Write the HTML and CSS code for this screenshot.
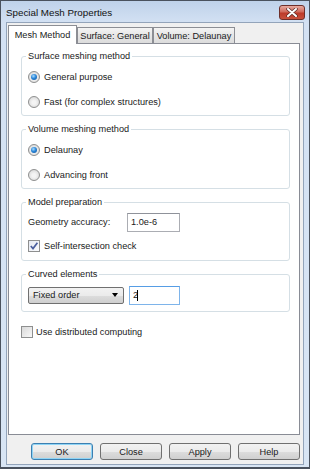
FILE: index.html
```html
<!DOCTYPE html>
<html>
<head>
<meta charset="utf-8">
<link rel="stylesheet" href="styles.css">
</head>
<body>
<div class="window">
  <div class="titlebar">
    <span class="title">Special Mesh Properties</span>
    <span class="close"><svg width="12" height="9" viewBox="0 0 12 9"><path d="M2 1 L10 8 M10 1 L2 8" stroke="#5a2a26" stroke-width="3.4" stroke-linecap="round"/><path d="M2 1 L10 8 M10 1 L2 8" stroke="#fff" stroke-width="2" stroke-linecap="round"/></svg></span>
  </div>
  <div class="client">
    <div class="tabs">
      <div class="tab active">Mesh Method</div>
      <div class="tab t2">Surface: General</div>
      <div class="tab t3">Volume: Delaunay</div>
    </div>
    <div class="panel">
      <fieldset class="group g-radio">
        <legend>Surface meshing method</legend>
        <div class="body">
          <div class="row"><span class="radio on"></span><span>General purpose</span></div>
          <div class="row"><span class="radio"></span><span>Fast (for complex structures)</span></div>
        </div>
      </fieldset>
      <fieldset class="group g-radio">
        <legend>Volume meshing method</legend>
        <div class="body">
          <div class="row"><span class="radio on"></span><span>Delaunay</span></div>
          <div class="row"><span class="radio"></span><span>Advancing front</span></div>
        </div>
      </fieldset>
      <fieldset class="group g-model">
        <legend>Model preparation</legend>
        <div class="body">
          <div class="row tall"><span class="field-label">Geometry accuracy:</span><span class="input acc">1.0e-6</span></div>
          <div class="row"><span class="check on"><svg width="10" height="10" viewBox="0 0 10 10"><path d="M1.8 5 L4 7.6 L8.4 1.8" fill="none" stroke="#4a5e9e" stroke-width="1.7"/></svg></span><span>Self-intersection check</span></div>
        </div>
      </fieldset>
      <fieldset class="group g-curved">
        <legend>Curved elements</legend>
        <div class="body">
          <div class="row tall">
            <span class="combo"><span>Fixed order</span><span class="arrow"></span></span>
            <span class="input focus order">2<span class="caret"></span></span>
          </div>
        </div>
      </fieldset>
      <div class="row dist"><span class="check"></span><span>Use distributed computing</span></div>
    </div>
    <div class="buttons">
      <span class="btn default">OK</span>
      <span class="btn">Close</span>
      <span class="btn">Apply</span>
      <span class="btn">Help</span>
    </div>
  </div>
</div>
</body>
</html>
```
FILE: styles.css
```css
html, body {
  margin: 0;
  padding: 0;
  background: #fff;
}
body {
  font-family: "Liberation Sans", Arial, sans-serif;
  font-size: 9.2px;
  color: #1a1a1a;
}
.window {
  width: 310px;
  height: 469px;
  box-sizing: border-box;
  border: 1px solid #4a525e;
  border-bottom-width: 2px;
  padding: 0 5px 2px 5px;
  display: flex;
  flex-direction: column;
  background: linear-gradient(#bfd2ea, #d3e1f3 22px, #d8e5f4);
}
.titlebar {
  height: 21px;
  display: flex;
  align-items: center;
  justify-content: space-between;
}
.title {
  font-size: 9.8px;
  color: #111;
  padding-top: 1px;
}
.close {
  width: 26px;
  height: 15px;
  box-sizing: border-box;
  margin-right: -1px;
  margin-top: 1px;
  border: 1px solid #6e2f2a;
  border-radius: 3px;
  background: linear-gradient(#e7aa9f, #d06a5c 45%, #bd3b2a 55%, #c8503c);
  display: flex;
  align-items: center;
  justify-content: center;
}
.client {
  flex: 1;
  display: flex;
  flex-direction: column;
  background: #f0f0f0;
  border: 1px solid #93a4ba;
  padding: 2px 2px 4px 1px;
}
.tabs {
  display: flex;
  align-items: flex-end;
  height: 18px;
}
.tab {
  box-sizing: border-box;
  height: 16px;
  border: 1px solid #8c8e94;
  border-bottom: none;
  background: linear-gradient(#f4f4f4, #e6e6e6 50%, #dcdcdc);
  display: flex;
  align-items: center;
  justify-content: center;
  padding-top: 1px;
}
.tab.active {
  width: 69px;
  height: 19px;
  margin-bottom: -1px;
  background: #fff;
  position: relative;
  z-index: 1;
  padding-top: 0;
}
.t2 { width: 76px; }
.t3 { width: 82px; }
.panel {
  flex: 1;
  background: #fff;
  border: 1px solid #898c95;
  padding: 6px 9px 0 12px;
  margin-right: 1px;
  display: flex;
  flex-direction: column;
}
.group {
  margin: 0 0 7px 0;
  border: 1px solid #d5dfe5;
  border-radius: 3px;
  padding: 0 6px 5px 6px;
  min-width: 0;
}
.group legend {
  padding: 0 2px;
  margin-left: -2px;
  line-height: 12px;
}
.body {
  display: flex;
  flex-direction: column;
}
.g-radio .body { padding-top: 7px; gap: 9px; }
.g-model .body { padding-top: 4px; gap: 6px; }
.g-model { padding-bottom: 6px; }
.g-curved .body { padding-top: 5px; }
.g-curved { padding-bottom: 6px; }
.row {
  display: flex;
  align-items: center;
  height: 16px;
  gap: 4px;
}
.row.tall { height: 20px; }
.radio {
  width: 12px;
  height: 12px;
  box-sizing: border-box;
  border-radius: 50%;
  border: 1px solid #8e8f8f;
  background: radial-gradient(circle at 50% 55%, #f4f4f4 25%, #d4d4d4 90%);
  display: flex;
  align-items: center;
  justify-content: center;
  flex: none;
}
.radio.on::after {
  content: "";
  width: 6px;
  height: 6px;
  border-radius: 50%;
  background: radial-gradient(circle at 40% 35%, #a9dcff 0, #2a86d8 45%, #0d4f98 100%);
}
.check {
  width: 12px;
  height: 12px;
  box-sizing: border-box;
  border: 1px solid #8e8f8f;
  background: linear-gradient(135deg, #d9d9d9, #f8f8f8);
  display: flex;
  align-items: center;
  justify-content: center;
  flex: none;
}
.check.on { background: linear-gradient(135deg, #e4e8f1, #fbfbfd); }
.field-label {
  width: 95px;
  flex: none;
}
.input {
  box-sizing: border-box;
  height: 19px;
  border: 1px solid #abadb3;
  border-top-color: #8f929a;
  background: #fff;
  display: flex;
  align-items: center;
  padding-left: 3px;
}
.input.acc { width: 53px; }
.input.focus {
  border-color: #7eb4ea;
  border-top-color: #569de5;
}
.input.order { width: 51px; margin-left: 1px; }
.caret {
  width: 1px;
  height: 11px;
  background: #000;
  margin-left: -1px;
}
.combo {
  box-sizing: border-box;
  width: 96px;
  height: 17px;
  border: 1px solid #707070;
  border-radius: 2px;
  background: linear-gradient(#f2f2f2, #ebebeb 50%, #dddddd 51%, #cfcfcf);
  display: flex;
  align-items: center;
  justify-content: space-between;
  padding: 0 5px 0 4px;
}
.arrow {
  width: 0;
  height: 0;
  border-left: 3.5px solid transparent;
  border-right: 3.5px solid transparent;
  border-top: 4px solid #000;
}
.dist {
  margin-top: 5px;
  gap: 3px;
}
.buttons {
  display: flex;
  justify-content: flex-end;
  gap: 7px;
  margin-top: 8px;
  padding-right: 1px;
}
.btn {
  box-sizing: border-box;
  width: 62px;
  height: 17px;
  border: 1px solid #707070;
  border-radius: 3px;
  background: linear-gradient(#f2f2f2, #ebebeb 50%, #dddddd 51%, #cfcfcf);
  display: flex;
  align-items: center;
  justify-content: center;
}
.btn.default {
  border-color: #3c7fb1;
  box-shadow: inset 0 0 0 1px #8fd4f5;
}
```
